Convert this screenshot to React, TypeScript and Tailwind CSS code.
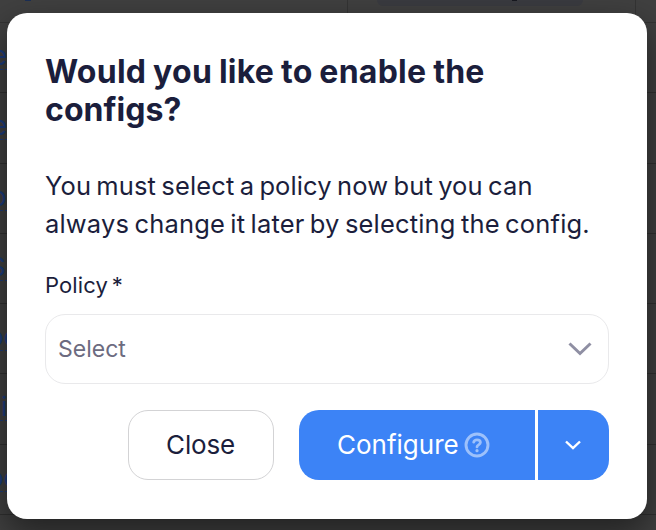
import clsx from "clsx";
import type { ReactNode } from "react";

const rows = [
  { name: "e", offset: "-ml-[8px]" },
  { name: "e", offset: "-ml-[8px]" },
  { name: "o", offset: "-ml-[9px]" },
  { name: "S", offset: "-ml-[11px]" },
  { name: "oc", offset: "-ml-[12px]" },
  { name: "i", offset: "ml-[1px]" },
  { name: "oc", offset: "-ml-[12px]" },
];

function ConfigsTable() {
  return (
    <div className="flex h-full flex-col bg-[#404040]">
      <div className="flex h-[23px] shrink-0 border-b border-[#343434]">
        <div className="w-[348px] border-r border-[#343434] pl-[25px]">
          <div className="h-px w-[6px] bg-[#1b2f56]" />
        </div>
        <div className="w-[288px] border-r border-[#343434] pl-[29px]">
          <div className="flex h-[6px] w-[206px] justify-center rounded-b-[14px] bg-[#3a3b40] pl-[68px]">
            <div className="h-px w-[5px] bg-[#17181f]" />
          </div>
        </div>
      </div>
      {rows.map((row, i) => (
        <div
          key={i}
          className="flex h-[70.3px] shrink-0 border-b border-[#303030]"
        >
          <div className="w-[348px] overflow-hidden border-r border-[#303030] pt-[16px]">
            <div className="h-[31px] overflow-hidden border-b border-dashed border-[#1f3c78] text-[26px] leading-[33px] text-[#1c3c7c]">
              <span className={clsx("inline-block", row.offset)}>
                {row.name}
              </span>
            </div>
          </div>
          <div className="w-[288px] border-r border-[#303030]" />
        </div>
      ))}
    </div>
  );
}

function Line({
  className,
  children,
}: {
  className?: string;
  children: ReactNode;
}) {
  return (
    <span className={clsx("block whitespace-nowrap", className)}>
      {children}
    </span>
  );
}

function HelpIcon() {
  return (
    <svg
      width="26"
      height="26"
      viewBox="0 0 26 26"
      fill="none"
      stroke="#9dc1fb"
      strokeLinecap="round"
      strokeLinejoin="round"
    >
      <circle cx="13" cy="13" r="11" strokeWidth="2.9" />
      <path
        d="M9.7 10.2C10 8.7 11.3 7.8 13 7.8c2 0 3.4 1.1 3.4 2.8 0 2.3-3.4 2.3-3.4 4.3"
        strokeWidth="2.8"
      />
      <circle cx="13" cy="18.7" r="1.6" fill="#9dc1fb" stroke="none" />
    </svg>
  );
}

export default function App() {
  return (
    <div className="relative h-[530px] w-[656px] overflow-hidden font-['Inter',sans-serif] text-[#1b1e3c]">
      <ConfigsTable />
      <div className="absolute inset-0 flex pt-[13px] pl-[7px]">
        <div className="flex h-[506px] w-[640px] flex-col rounded-[20px] bg-white pt-[40px] pr-[38px] pl-[38px] shadow-[0_14px_34px_2px_rgba(0,0,0,0.46)]">
          <h1 className="text-[32px] leading-[38px] font-bold">
            <Line className="tracking-[0.25px] [word-spacing:-1px]">
              Would you like to enable the
            </Line>
            <Line className="tracking-[0.05px]">configs?</Line>
          </h1>
          <p className="mt-[38px] text-[25.5px] leading-[38px]">
            <Line className="tracking-[0.12px] [word-spacing:-2px]">
              You must select a policy now but you can
            </Line>
            <Line className="tracking-[0.17px] [word-spacing:-2px]">
              always change it later by selecting the config.
            </Line>
          </p>
          <label className="mt-[27px] block text-[22px] leading-[30px] tracking-[0.1px] [word-spacing:-2.5px]">
            Policy *
          </label>
          <button className="mt-[14px] flex h-[70px] w-[564px] shrink-0 items-center justify-between rounded-[20px] border border-[#e9e9eb] pr-[16px] pl-[12px] text-[23px] text-[#6c6b80]">
            <span>Select</span>
            <svg width="24" height="14" viewBox="0 0 24 14" fill="none">
              <path
                d="M1.5 1.5 12 11.5 22.5 1.5"
                stroke="#8f8fa3"
                strokeWidth="3"
              />
            </svg>
          </button>
          <div className="mt-[26px] flex h-[70px] w-[564px] shrink-0 justify-end text-[26px]">
            <button className="mr-[25px] w-[146px] rounded-[20px] border border-[#d3d3d5] pr-px pb-px tracking-[-0.2px]">
              Close
            </button>
            <button className="mr-[3px] flex w-[236px] items-center rounded-l-[20px] bg-[#3c83f6] pl-[38px] text-white">
              <span className="w-[127px] pb-px text-left">Configure</span>
              <HelpIcon />
            </button>
            <button className="flex w-[71px] items-center justify-center rounded-r-[20px] bg-[#3c83f6] pr-[2px]">
              <svg width="16" height="10" viewBox="0 0 16 10" fill="none">
                <path
                  d="M1 1.5 8 8.2 15 1.5"
                  stroke="white"
                  strokeWidth="2.4"
                />
              </svg>
            </button>
          </div>
        </div>
      </div>
    </div>
  );
}
